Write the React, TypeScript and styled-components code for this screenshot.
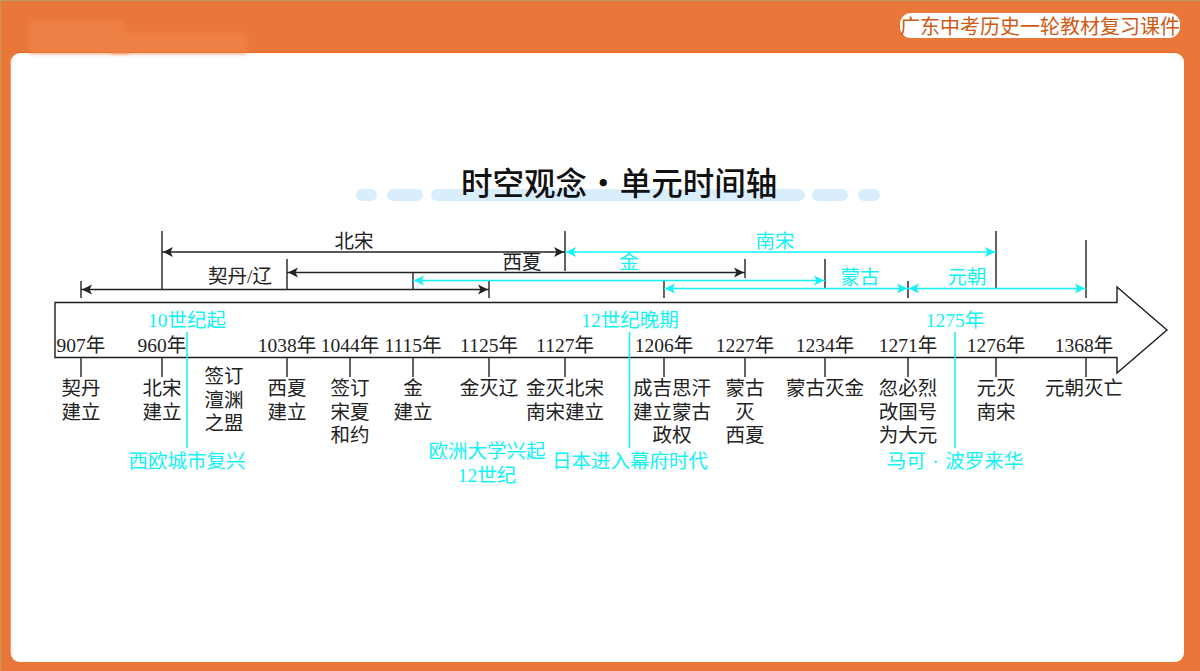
import React from "react";
import styled, { createGlobalStyle } from "styled-components";

const Global = createGlobalStyle`
  html, body { margin: 0; padding: 0; background: #e9773a; }
`;

const Slide = styled.div`
  width: 1200px;
  height: 671px;
  box-sizing: border-box;
  background: #e9773a;
  border-top: 1px solid #b89c5e;
  border-left: 1px solid #c09a5c;
  padding-left: 10px;
  display: flex;
  flex-direction: column;
  overflow: hidden;
`;

const Header = styled.header`
  position: relative;
  height: 52px;
  flex: none;
  display: flex;
  justify-content: flex-end;
  align-items: flex-start;
  padding-right: 20px;
`;

const GlowLeft = styled.div`
  position: absolute;
  left: 18px;
  top: 19px;
  width: 100px;
  height: 33px;
  background: #ed8044;
  border-radius: 6px 14px 0 0;
  filter: blur(2px);
`;

const GlowRight = styled.div`
  position: absolute;
  left: 100px;
  top: 32px;
  width: 136px;
  height: 20px;
  background: #ed8044;
  filter: blur(2px);
`;

const CourseTag = styled.div`
  margin-top: 12px;
  width: 280px;
  height: 25px;
  border-radius: 11px;
  background: #fff;
  color: #cf5a14;
  font: 400 20px/25px "Noto Sans CJK SC", sans-serif;
  text-align: center;
  white-space: nowrap;
`;

const Card = styled.main`
  width: 1173px;
  height: 609px;
  flex: none;
  background: #fff;
  border-radius: 9px;
  box-shadow: 0 -1px 0 #e8661f, -1px 0 0 #f59a63;
  display: flex;
  flex-direction: column;
`;

const TitleBlock = styled.div`
  margin-top: 108px;
  height: 64px;
  flex: none;
  display: grid;
`;

const Title = styled.h1`
  grid-area: 1 / 1;
  margin: 0;
  padding-left: 450px;
  color: #111;
  font: 500 31.5px/40px "Noto Sans CJK SC", sans-serif;
  word-spacing: -6.5px;
  white-space: pre;
  position: relative;
`;

const PillRow = styled.div`
  grid-area: 1 / 1;
  align-self: start;
  margin-top: 28px;
  padding-left: 345px;
  display: flex;
`;

const Pill = styled.span<{ $w: number; $gap: number }>`
  width: ${(p) => p.$w}px;
  margin-left: ${(p) => p.$gap}px;
  height: 12px;
  border-radius: 6px;
  background: #d9eefd;
`;

const Diagram = styled.section`
  position: relative;
  width: 1173px;
  height: 300px;
  flex: none;
`;

const Lines = styled.svg`
  position: absolute;
  inset: 0;
  display: block;
`;

const Label = styled.div<{ $x: number; $y: number; $cyan?: boolean }>`
  position: absolute;
  left: ${(p) => p.$x - 11}px;
  top: ${(p) => p.$y - 225}px;
  transform: translateX(-50%);
  color: ${(p) => (p.$cyan ? "#12f2f7" : "#222")};
  font: 400 19.5px/23.6px "Liberation Serif", "Noto Sans CJK SC", serif;
  text-align: center;
  white-space: pre;
`;

const BLACK = "#222";
const CYAN = "#12f2f7";

function Head({ x, y, dir, color }: { x: number; y: number; dir: 1 | -1; color: string }) {
  const p = [
    [x, y],
    [x - dir * 10, y - 5],
    [x - dir * 7.5, y],
    [x - dir * 10, y + 5],
  ]
    .map((c) => c.join(","))
    .join(" ");
  return <polygon points={p} fill={color} />;
}

function Span({ a, b, y, color }: { a: number; b: number; y: number; color: string }) {
  return (
    <g>
      <line x1={a} x2={b} y1={y} y2={y} stroke={color} strokeWidth={1.6} />
      <Head x={a + 1} y={y} dir={-1} color={color} />
      <Head x={b - 1} y={y} dir={1} color={color} />
    </g>
  );
}

const pills = [
  { w: 21, gap: 0 },
  { w: 36, gap: 10 },
  { w: 374, gap: 8 },
  { w: 36, gap: 7 },
  { w: 22, gap: 10 },
];

const ticks = [81, 162, 287, 350, 413, 489, 565, 664, 745, 825, 908, 996, 1086];

const verticals: [number, number, number][] = [
  [162, 231, 289],
  [565, 231, 271],
  [996, 231, 289],
  [1086, 240, 298],
  [287, 259, 289],
  [745, 259, 278],
  [825, 259, 288],
  [413, 272, 289],
  [81, 281, 298],
  [489, 281, 298],
  [664, 281, 298],
  [908, 281, 298],
];

const spans: [number, number, number, string][] = [
  [162, 565, 252, BLACK],
  [287, 745, 272.5, BLACK],
  [81, 489, 289.5, BLACK],
  [565, 996, 252, CYAN],
  [413, 825, 280.5, CYAN],
  [664, 908, 288.5, CYAN],
  [908, 1086, 288.5, CYAN],
];

const labels: { x: number; y: number; text: string; cyan?: boolean }[] = [
  { x: 354, y: 230, text: "北宋" },
  { x: 240, y: 265, text: "契丹/辽" },
  { x: 522, y: 251, text: "西夏" },
  { x: 775, y: 230, text: "南宋", cyan: true },
  { x: 629, y: 251, text: "金", cyan: true },
  { x: 860, y: 266, text: "蒙古", cyan: true },
  { x: 967, y: 266, text: "元朝", cyan: true },

  { x: 187, y: 309, text: "10世纪起", cyan: true },
  { x: 630, y: 309, text: "12世纪晚期", cyan: true },
  { x: 955, y: 309, text: "1275年", cyan: true },

  { x: 81, y: 334, text: "907年" },
  { x: 162, y: 334, text: "960年" },
  { x: 287, y: 334, text: "1038年" },
  { x: 350, y: 334, text: "1044年" },
  { x: 413, y: 334, text: "1115年" },
  { x: 489, y: 334, text: "1125年" },
  { x: 565, y: 334, text: "1127年" },
  { x: 664, y: 334, text: "1206年" },
  { x: 745, y: 334, text: "1227年" },
  { x: 825, y: 334, text: "1234年" },
  { x: 908, y: 334, text: "1271年" },
  { x: 996, y: 334, text: "1276年" },
  { x: 1084, y: 334, text: "1368年" },

  { x: 81, y: 377, text: "契丹\n建立" },
  { x: 162, y: 377, text: "北宋\n建立" },
  { x: 224, y: 365, text: "签订\n澶渊\n之盟" },
  { x: 287, y: 377, text: "西夏\n建立" },
  { x: 350, y: 377, text: "签订\n宋夏\n和约" },
  { x: 413, y: 377, text: "金\n建立" },
  { x: 489, y: 377, text: "金灭辽" },
  { x: 565, y: 377, text: "金灭北宋\n南宋建立" },
  { x: 672, y: 377, text: "成吉思汗\n建立蒙古\n政权" },
  { x: 745, y: 377, text: "蒙古\n灭\n西夏" },
  { x: 825, y: 377, text: "蒙古灭金" },
  { x: 908, y: 377, text: "忽必烈\n改国号\n为大元" },
  { x: 996, y: 377, text: "元灭\n南宋" },
  { x: 1084, y: 377, text: "元朝灭亡" },

  { x: 187, y: 450, text: "西欧城市复兴", cyan: true },
  { x: 487, y: 440, text: "欧洲大学兴起\n12世纪", cyan: true },
  { x: 630, y: 450, text: "日本进入幕府时代", cyan: true },
  { x: 955, y: 450, text: "马可 \u200a· \u200a波罗来华", cyan: true },
];

export default function App() {
  return (
    <>
      <Global />
      <Slide>
        <Header>
          <GlowLeft />
          <GlowRight />
          <CourseTag>广东中考历史一轮教材复习课件</CourseTag>
        </Header>
        <Card>
          <TitleBlock>
            <PillRow>
              {pills.map((p, i) => (
                <Pill key={i} $w={p.w} $gap={p.gap} />
              ))}
            </PillRow>
            <Title>时空观念 · 单元时间轴</Title>
          </TitleBlock>
          <Diagram>
            <Lines width={1173} height={300} viewBox="11 225 1173 300">
              <path
                d="M55 302.5H1117V287L1167 330L1117 373V357.5H55Z"
                fill="none"
                stroke="#1c1c1c"
                strokeWidth={1.4}
              />
              {ticks.map((x) => (
                <line key={x} x1={x} x2={x} y1={358} y2={377} stroke={BLACK} strokeWidth={1.4} />
              ))}
              {verticals.map(([x, a, b], i) => (
                <line key={i} x1={x} x2={x} y1={a} y2={b} stroke={BLACK} strokeWidth={1.4} />
              ))}
              {spans.map(([a, b, y, c], i) => (
                <Span key={i} a={a} b={b} y={y} color={c} />
              ))}
              {[187, 629.5, 955].map((x) => (
                <line key={x} x1={x} x2={x} y1={332} y2={448} stroke={CYAN} strokeWidth={1.5} />
              ))}
            </Lines>
            {labels.map((l, i) => (
              <Label key={i} $x={l.x} $y={l.y} $cyan={l.cyan}>
                {l.text}
              </Label>
            ))}
          </Diagram>
        </Card>
      </Slide>
    </>
  );
}
